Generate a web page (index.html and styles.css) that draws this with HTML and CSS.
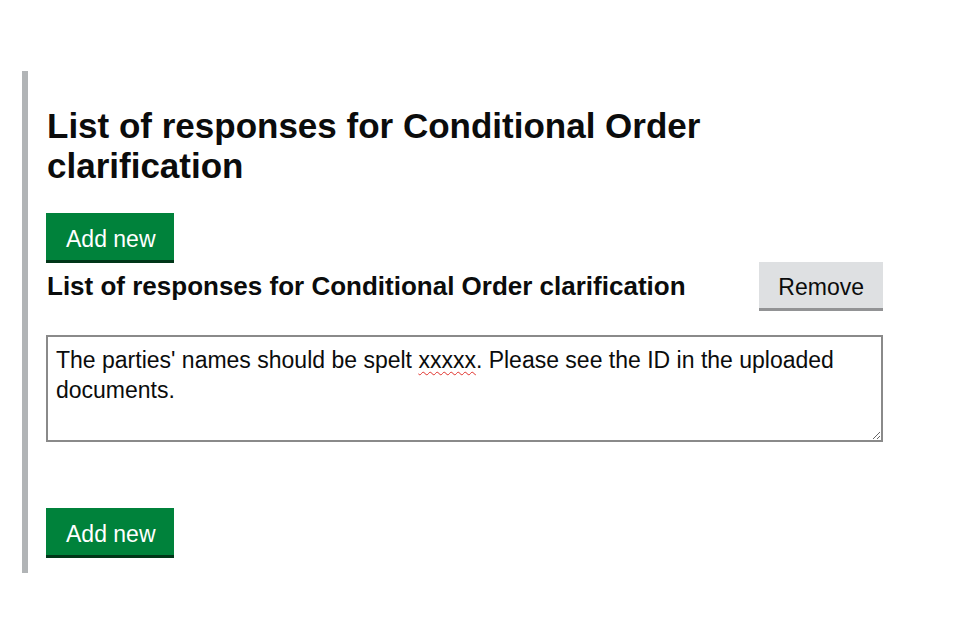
FILE: index.html
```html
<!DOCTYPE html>
<html lang="en">
<head>
<meta charset="utf-8">
<title>List of responses for Conditional Order clarification</title>
<link rel="stylesheet" href="styles.css">
</head>
<body>
<div class="collection">
  <h1 class="title">List of responses for Conditional Order clarification</h1>
  <button class="btn btn-primary btn-top" type="button">Add new</button>
  <div class="item">
    <div class="item-head">
      <h2 class="item-title">List of responses for Conditional Order clarification</h2>
      <button class="btn btn-secondary" type="button">Remove</button>
    </div>
    <div class="textbox" role="textbox" aria-multiline="true" contenteditable="true" spellcheck="false">The parties' names should be spelt <span class="misspelt">xxxxx</span>. Please see the ID in the uploaded documents.</div>
  </div>
  <button class="btn btn-primary btn-bottom" type="button">Add new</button>
</div>
</body>
</html>
```
FILE: styles.css
```css
html, body {
  margin: 0;
  padding: 0;
  background: #ffffff;
}

body {
  font-family: "Liberation Sans", Arial, sans-serif;
  color: #0b0c0c;
}

.collection {
  margin: 71px 77px 0 22px;
  border-left: 6px solid #b1b4b6;
  padding: 35px 0 18px 18px;
  display: flex;
  flex-direction: column;
  align-items: flex-start;
}

.title {
  margin: 0;
  padding-left: 1px;
  font-size: 35px;
  line-height: 40px;
  font-weight: 700;
}

.btn {
  font-family: "Liberation Sans", Arial, sans-serif;
  font-size: 23px;
  line-height: 23px;
  border: 0;
  border-radius: 0;
  padding: 15px 18px 9px 20px;
  margin: 0;
  cursor: pointer;
}

.btn-primary {
  background: #00823b;
  color: #ffffff;
  box-shadow: 0 3px 0 #003618;
}

.btn-secondary {
  background: #dee0e2;
  color: #0b0c0c;
  box-shadow: 0 3px 0 #929395;
  padding: 14px 19px 9px 19px;
}

.btn-top {
  margin-top: 27px;
}

.item {
  align-self: stretch;
  margin-top: 2px;
  display: flex;
  flex-direction: column;
}

.item-head {
  display: flex;
  justify-content: space-between;
  align-items: center;
}

.item-title {
  margin: 0;
  padding: 2px 0 0 1px;
  font-size: 26px;
  line-height: 30px;
  font-weight: 700;
}

.textbox {
  margin-top: 27px;
  box-sizing: border-box;
  height: 107px;
  border: 2px solid #8a8a8a;
  padding: 8px 8px 5px 8px;
  font-size: 23px;
  line-height: 30px;
  overflow: auto;
  resize: vertical;
  outline: none;
  white-space: pre-wrap;
}

.misspelt {
  text-decoration: underline wavy #e0312b;
  text-decoration-thickness: 1px;
  text-underline-offset: 3px;
}

.btn-bottom {
  margin-top: 66px;
}
```
